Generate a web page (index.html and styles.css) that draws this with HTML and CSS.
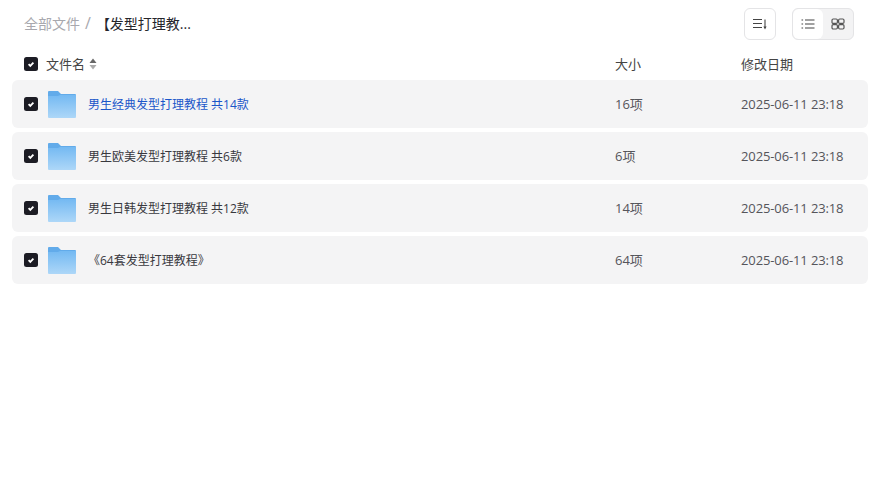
FILE: index.html
```html
<!DOCTYPE html>
<html lang="zh-CN">
<head>
  <meta charset="UTF-8" />
  <title>全部文件</title>
  <link rel="stylesheet" href="styles.css">
</head>
<body>
  <svg class="defs" width="0" height="0">
    <defs>
      <linearGradient id="folder-fill" x1="0" y1="0" x2="0" y2="1">
        <stop offset="0" stop-color="#74b9f2" />
        <stop offset="1" stop-color="#add7f8" />
      </linearGradient>
      <symbol id="folder" viewBox="0 0 28 27">
        <path d="M1 0h9l3 3h14a1 1 0 0 1 1 1v3H0V1a1 1 0 0 1 1-1z" fill="#62abea" />
        <path d="M0 5h10l2-1h16v22a1 1 0 0 1-1 1H1a1 1 0 0 1-1-1z" fill="url(#folder-fill)" />
      </symbol>
      <symbol id="check" viewBox="0 0 14 14">
        <rect width="14" height="14" rx="2.5" fill="#1c1c24" />
        <path d="M4.6 7.2l1.7 1.7L9.4 5.6" fill="none" stroke="#fff" stroke-width="1.8" />
      </symbol>
    </defs>
  </svg>

  <div class="topbar">
    <div class="crumbs">
      <span class="crumb-root">全部文件</span>
      <span class="crumb-sep">/</span>
      <span class="crumb-current">【发型打理教...</span>
    </div>
    <div class="tools">
      <button class="tool-btn">
        <svg width="16" height="16" viewBox="0 0 16 16" fill="none" stroke="#444" stroke-width="1.1">
          <path d="M1 3.5h9M1 7.5h9M1 11.5h9" />
          <path d="M13 3.5v8" />
          <path d="M11.4 10.5L13 13.5l1.6-3z" fill="#444" stroke="none" />
        </svg>
      </button>
      <div class="view-switch">
        <span class="view-item active">
          <svg width="14" height="14" viewBox="0 0 14 14" fill="none" stroke="#444" stroke-width="1.1">
            <path d="M4 3h9.5M4 7h9.5M4 11h9.5M.5 3h1.6M.5 7h1.6M.5 11h1.6" />
          </svg>
        </span>
        <span class="view-item">
          <svg width="14" height="14" viewBox="0 0 14 14" fill="none" stroke="#555" stroke-width="1.2">
            <rect x="1" y="2" width="5.4" height="4.4" rx="1.2" />
            <rect x="7.6" y="2" width="5.4" height="4.4" rx="1.2" />
            <rect x="1" y="7.6" width="5.4" height="4.4" rx="1.2" />
            <rect x="7.6" y="7.6" width="5.4" height="4.4" rx="1.2" />
          </svg>
        </span>
      </div>
    </div>
  </div>

  <div class="list-head">
    <svg class="checkbox"><use href="#check" /></svg>
    <div class="col-name">
      <span class="head-label">文件名</span>
      <svg class="sort" width="8" height="12" viewBox="0 0 8 12">
        <path d="M4 0.5L7.5 5H.5z" fill="#666" />
        <path d="M4 11.5L.5 7h7z" fill="#aaa" />
      </svg>
    </div>
    <div class="col-size"><span class="head-label">大小</span></div>
    <div class="col-date"><span class="head-label">修改日期</span></div>
  </div>

  <div class="list">
    <div class="row">
      <svg class="checkbox"><use href="#check" /></svg>
      <svg class="folder"><use href="#folder" /></svg>
      <div class="col-name"><a class="file-link hover" href="#">男生经典发型打理教程 共14款</a></div>
      <div class="col-size">16项</div>
      <div class="col-date">2025-06-11 23:18</div>
    </div>
    <div class="row">
      <svg class="checkbox"><use href="#check" /></svg>
      <svg class="folder"><use href="#folder" /></svg>
      <div class="col-name"><a class="file-link" href="#">男生欧美发型打理教程 共6款</a></div>
      <div class="col-size">6项</div>
      <div class="col-date">2025-06-11 23:18</div>
    </div>
    <div class="row">
      <svg class="checkbox"><use href="#check" /></svg>
      <svg class="folder"><use href="#folder" /></svg>
      <div class="col-name"><a class="file-link" href="#">男生日韩发型打理教程 共12款</a></div>
      <div class="col-size">14项</div>
      <div class="col-date">2025-06-11 23:18</div>
    </div>
    <div class="row">
      <svg class="checkbox"><use href="#check" /></svg>
      <svg class="folder"><use href="#folder" /></svg>
      <div class="col-name"><a class="file-link" href="#">《64套发型打理教程》</a></div>
      <div class="col-size">64项</div>
      <div class="col-date">2025-06-11 23:18</div>
    </div>
  </div>
</body>
</html>
```

FILE: styles.css
```css
* {
  box-sizing: border-box;
}

body {
  margin: 0;
  background: #fff;
  color: #333;
  font-family: "Open Sans", "Noto Sans CJK SC", sans-serif;
  font-size: 13px;
}

.defs {
  display: block;
  height: 0;
}

.topbar {
  display: flex;
  align-items: center;
  justify-content: space-between;
  height: 32px;
  margin-top: 8px;
  padding: 0 24px;
}

.crumbs {
  display: flex;
  align-items: center;
  margin-top: -2px;
  font-size: 14px;
}

.crumb-root {
  color: #a8a8ae;
}

.crumb-sep {
  margin: 0 5px 0 5px;
  color: #a8a8ae;
  font-size: 16px;
}

.crumb-current {
  color: #25252b;
}

.tools {
  display: flex;
  gap: 16px;
}

.tool-btn {
  display: flex;
  align-items: center;
  justify-content: center;
  width: 32px;
  height: 32px;
  padding: 0;
  background: #fff;
  border: 1px solid #e4e4e6;
  border-radius: 6px;
}

.view-switch {
  display: flex;
  width: 62px;
  height: 32px;
  overflow: hidden;
  background: #f3f3f4;
  border: 1px solid #e4e4e6;
  border-radius: 6px;
}

.view-item {
  display: flex;
  flex: 1;
  align-items: center;
  justify-content: center;
}

.view-item.active {
  background: #fff;
  border-radius: 6px;
}

.list-head {
  display: flex;
  align-items: center;
  height: 32px;
  margin-top: 8px;
  padding: 0 22px 0 24px;
}

.list-head .col-name {
  display: flex;
  align-items: center;
  gap: 4px;
  padding-left: 8px;
}

.head-label {
  display: block;
  margin-top: -2px;
  color: #444;
}

.checkbox {
  flex: none;
  width: 14px;
  height: 14px;
}

.list {
  display: flex;
  flex-direction: column;
  gap: 4px;
  margin: 0 10px 0 12px;
}

.row {
  display: flex;
  align-items: center;
  height: 48px;
  padding: 0 12px;
  background: #f4f4f5;
  border-radius: 6px;
}

.folder {
  flex: none;
  width: 28px;
  height: 27px;
  margin: 1px 1px 0 10px;
}

.col-name {
  flex: 1;
  min-width: 0;
}

.row .col-name {
  padding-left: 11px;
  font-size: 12px;
}

.col-size {
  width: 126px;
  flex: none;
}

.col-date {
  width: 115px;
  flex: none;
}

.row .col-size,
.row .col-date {
  color: #55555b;
  margin-top: -1px;
}

.row .col-date {
  letter-spacing: -0.12px;
}

.file-link {
  color: #38383e;
  text-decoration: none;
}

.file-link.hover {
  color: #1a56c9;
}
```
